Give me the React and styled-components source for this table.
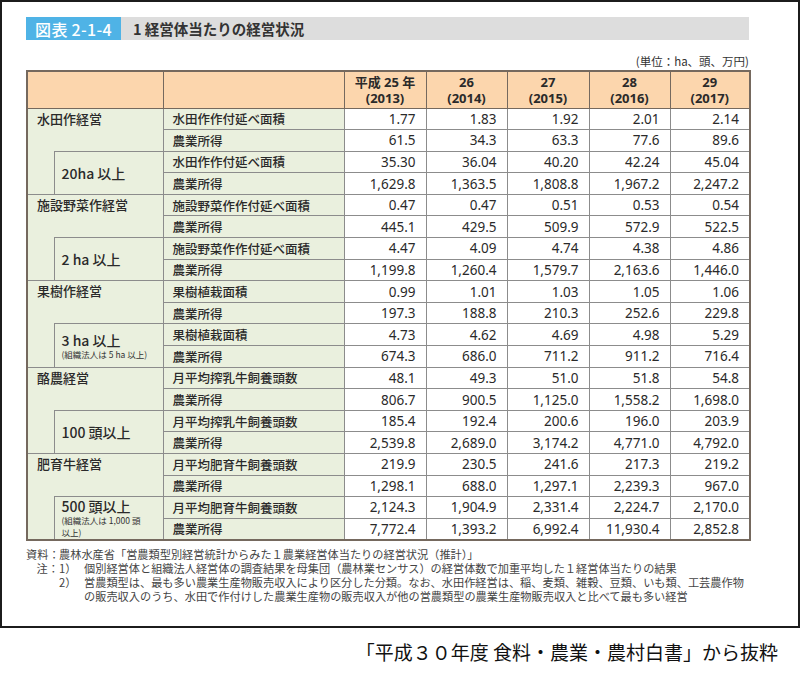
import React from "react";
import styled, { createGlobalStyle } from "styled-components";

const GlobalStyle = createGlobalStyle`
  body {
    margin: 0;
    background: #ffffff;
    font-family: "Noto Sans CJK JP", "Noto Sans", sans-serif;
    color: #222;
  }
`;

const JP = `"Noto Sans CJK JP", "Noto Sans", sans-serif`;
const NUM = `"Noto Sans", "Noto Sans CJK JP", sans-serif`;

const Frame = styled.div`
  box-sizing: border-box;
  width: 800px;
  height: 628px;
  border: 2px solid #1c1c1c;
  padding: 15px 0 0 24px;
`;

const TitleBar = styled.div`
  display: flex;
  width: 723px;
  height: 23px;
`;

const TitleTag = styled.div`
  width: 95px;
  background: #4fb3e6;
  color: #ffffff;
  font-family: ${JP};
  font-size: 16px;
  font-weight: 500;
  display: flex;
  align-items: center;
  justify-content: center;
  letter-spacing: 0.3px;
`;

const TitleText = styled.div`
  flex: 1;
  background: #dddddd;
  padding-left: 12px;
  font-family: ${JP};
  font-size: 14.5px;
  font-weight: 700;
  color: #333;
  display: flex;
  align-items: center;
`;

const Unit = styled.div`
  width: 723px;
  margin-top: 13px;
  text-align: right;
  font-family: ${JP};
  font-size: 11.5px;
  line-height: 16px;
  color: #333;
`;

const Table = styled.table`
  width: 723px;
  margin-top: 1px;
  border-collapse: collapse;
  table-layout: fixed;
  border: 2px solid #75695e;
`;

const HeadRow = styled.tr`
  height: 37px;
`;

const Row = styled.tr`
  height: 21.6px;
`;

const HeadCell = styled.th`
  background: #fcd6ad;
  border: 1px solid #75695e;
  font-family: ${NUM};
  font-size: 13px;
  font-weight: 700;
  line-height: 16px;
  color: #2a2a2a;
  padding: 0;
  text-align: center;
`;

const green = "#eaf0de";
const line = "#8c8c8c";

const CatCell = styled.td`
  background: ${green};
  border-top: 1px solid ${line};
  border-right: 1px solid ${line};
  border-bottom: none;
  vertical-align: top;
  padding: 0 0 0 9px;
  font-family: ${JP};
  font-size: 13px;
  font-weight: 500;
  line-height: 19px;
  color: #2a2a2a;
`;

const IndentCell = styled.td`
  background: ${green};
  border-top: none;
  border-bottom: 1px solid ${line};
  padding: 0;
`;

const SubCell = styled.td`
  background: ${green};
  border: 1px solid ${line};
  vertical-align: middle;
  padding: 0 0 0 7px;
  font-family: ${JP};
  color: #2a2a2a;
`;

const SubLabel = styled.div`
  font-size: 14px;
  font-weight: 500;
  line-height: 16px;
`;

const SubNote = styled.div`
  font-size: 8.5px;
  line-height: 12px;
  white-space: nowrap;
  color: #333;
`;

const ItemCell = styled.td`
  background: ${green};
  border: 1px solid ${line};
  padding: 0 0 0 9px;
  font-family: ${JP};
  font-size: 12.5px;
  font-weight: 500;
  white-space: nowrap;
  color: #2a2a2a;
`;

const NumCell = styled.td`
  background: #ffffff;
  border: 1px solid ${line};
  padding: 0 10px 0 0;
  text-align: right;
  font-family: ${NUM};
  font-size: 13.5px;
  color: #2a2a2a;
`;

const Notes = styled.div`
  display: grid;
  grid-template-columns: 33px 25px 1fr;
  width: 723px;
  margin-top: 6px;
  font-family: ${JP};
  font-size: 11.2px;
  line-height: 14px;
  color: #444;
`;

const NoteLabel = styled.span`
  text-align: ${(p) => (p.$right ? "right" : "left")};
  white-space: nowrap;
`;

const NoteText = styled.span`
  grid-column: ${(p) => (p.$wide ? "2 / 4" : "3")};
  white-space: nowrap;
`;

const Caption = styled.div`
  padding: 10px 22px 0 0;
  text-align: right;
  font-family: ${JP};
  font-size: 19px;
  color: #111;
`;

const years = [
  ["平成 25 年", "(2013)"],
  ["26", "(2014)"],
  ["27", "(2015)"],
  ["28", "(2016)"],
  ["29", "(2017)"],
];

const groups = [
  {
    cat: "水田作経営",
    sub: "20ha 以上",
    rows: [
      ["水田作作付延べ面積", "1.77", "1.83", "1.92", "2.01", "2.14"],
      ["農業所得", "61.5", "34.3", "63.3", "77.6", "89.6"],
      ["水田作作付延べ面積", "35.30", "36.04", "40.20", "42.24", "45.04"],
      ["農業所得", "1,629.8", "1,363.5", "1,808.8", "1,967.2", "2,247.2"],
    ],
  },
  {
    cat: "施設野菜作経営",
    sub: "2 ha 以上",
    rows: [
      ["施設野菜作作付延べ面積", "0.47", "0.47", "0.51", "0.53", "0.54"],
      ["農業所得", "445.1", "429.5", "509.9", "572.9", "522.5"],
      ["施設野菜作作付延べ面積", "4.47", "4.09", "4.74", "4.38", "4.86"],
      ["農業所得", "1,199.8", "1,260.4", "1,579.7", "2,163.6", "1,446.0"],
    ],
  },
  {
    cat: "果樹作経営",
    sub: "3 ha 以上",
    note: ["(組織法人は 5 ha 以上)"],
    rows: [
      ["果樹植栽面積", "0.99", "1.01", "1.03", "1.05", "1.06"],
      ["農業所得", "197.3", "188.8", "210.3", "252.6", "229.8"],
      ["果樹植栽面積", "4.73", "4.62", "4.69", "4.98", "5.29"],
      ["農業所得", "674.3", "686.0", "711.2", "911.2", "716.4"],
    ],
  },
  {
    cat: "酪農経営",
    sub: "100 頭以上",
    rows: [
      ["月平均搾乳牛飼養頭数", "48.1", "49.3", "51.0", "51.8", "54.8"],
      ["農業所得", "806.7", "900.5", "1,125.0", "1,558.2", "1,698.0"],
      ["月平均搾乳牛飼養頭数", "185.4", "192.4", "200.6", "196.0", "203.9"],
      ["農業所得", "2,539.8", "2,689.0", "3,174.2", "4,771.0", "4,792.0"],
    ],
  },
  {
    cat: "肥育牛経営",
    sub: "500 頭以上",
    note: ["(組織法人は 1,000 頭", "以上)"],
    rows: [
      ["月平均肥育牛飼養頭数", "219.9", "230.5", "241.6", "217.3", "219.2"],
      ["農業所得", "1,298.1", "688.0", "1,297.1", "2,239.3", "967.0"],
      ["月平均肥育牛飼養頭数", "2,124.3", "1,904.9", "2,331.4", "2,224.7", "2,170.0"],
      ["農業所得", "7,772.4", "1,393.2", "6,992.4", "11,930.4", "2,852.8"],
    ],
  },
];

const Cells = ({ row }) => (
  <>
    <ItemCell>{row[0]}</ItemCell>
    {row.slice(1).map((v, i) => (
      <NumCell key={i}>{v}</NumCell>
    ))}
  </>
);

const Group = ({ g }) => (
  <>
    <Row>
      <CatCell colSpan={2} rowSpan={2}>
        {g.cat}
      </CatCell>
      <Cells row={g.rows[0]} />
    </Row>
    <Row>
      <Cells row={g.rows[1]} />
    </Row>
    <Row>
      <IndentCell rowSpan={2} />
      <SubCell rowSpan={2}>
        <SubLabel>{g.sub}</SubLabel>
        {g.note && g.note.map((n) => <SubNote key={n}>{n}</SubNote>)}
      </SubCell>
      <Cells row={g.rows[2]} />
    </Row>
    <Row>
      <Cells row={g.rows[3]} />
    </Row>
  </>
);

const App = () => (
  <>
    <GlobalStyle />
    <Frame>
      <TitleBar>
        <TitleTag>図表 2-1-4</TitleTag>
        <TitleText>1 経営体当たりの経営状況</TitleText>
      </TitleBar>
      <Unit>(単位：ha、頭、万円)</Unit>
      <Table>
        <colgroup>
          <col style={{ width: 27 }} />
          <col style={{ width: 109 }} />
          <col style={{ width: 181 }} />
          <col style={{ width: 82 }} />
          <col style={{ width: 81 }} />
          <col style={{ width: 82 }} />
          <col style={{ width: 81 }} />
          <col style={{ width: 80 }} />
        </colgroup>
        <thead>
          <HeadRow>
            <HeadCell colSpan={2} />
            <HeadCell />
            {years.map(([a, b]) => (
              <HeadCell key={b}>
                {a}
                <br />
                {b}
              </HeadCell>
            ))}
          </HeadRow>
        </thead>
        <tbody>
          {groups.map((g) => (
            <Group key={g.cat} g={g} />
          ))}
        </tbody>
      </Table>
      <Notes>
        <NoteLabel>資料：</NoteLabel>
        <NoteText $wide>
          農林水産省「営農類型別経営統計からみた１農業経営体当たりの経営状況（推計）」
        </NoteText>
        <NoteLabel $right>注：</NoteLabel>
        <NoteLabel>1）</NoteLabel>
        <NoteText>
          個別経営体と組織法人経営体の調査結果を母集団（農林業センサス）の経営体数で加重平均した１経営体当たりの結果
        </NoteText>
        <NoteLabel />
        <NoteLabel>2）</NoteLabel>
        <NoteText>
          営農類型は、最も多い農業生産物販売収入により区分した分類。なお、水田作経営は、稲、麦類、雑穀、豆類、いも類、工芸農作物
        </NoteText>
        <NoteText>
          の販売収入のうち、水田で作付けした農業生産物の販売収入が他の営農類型の農業生産物販売収入と比べて最も多い経営
        </NoteText>
      </Notes>
    </Frame>
    <Caption>「平成３０年度 食料・農業・農村白書」から抜粋</Caption>
  </>
);

export default App;
